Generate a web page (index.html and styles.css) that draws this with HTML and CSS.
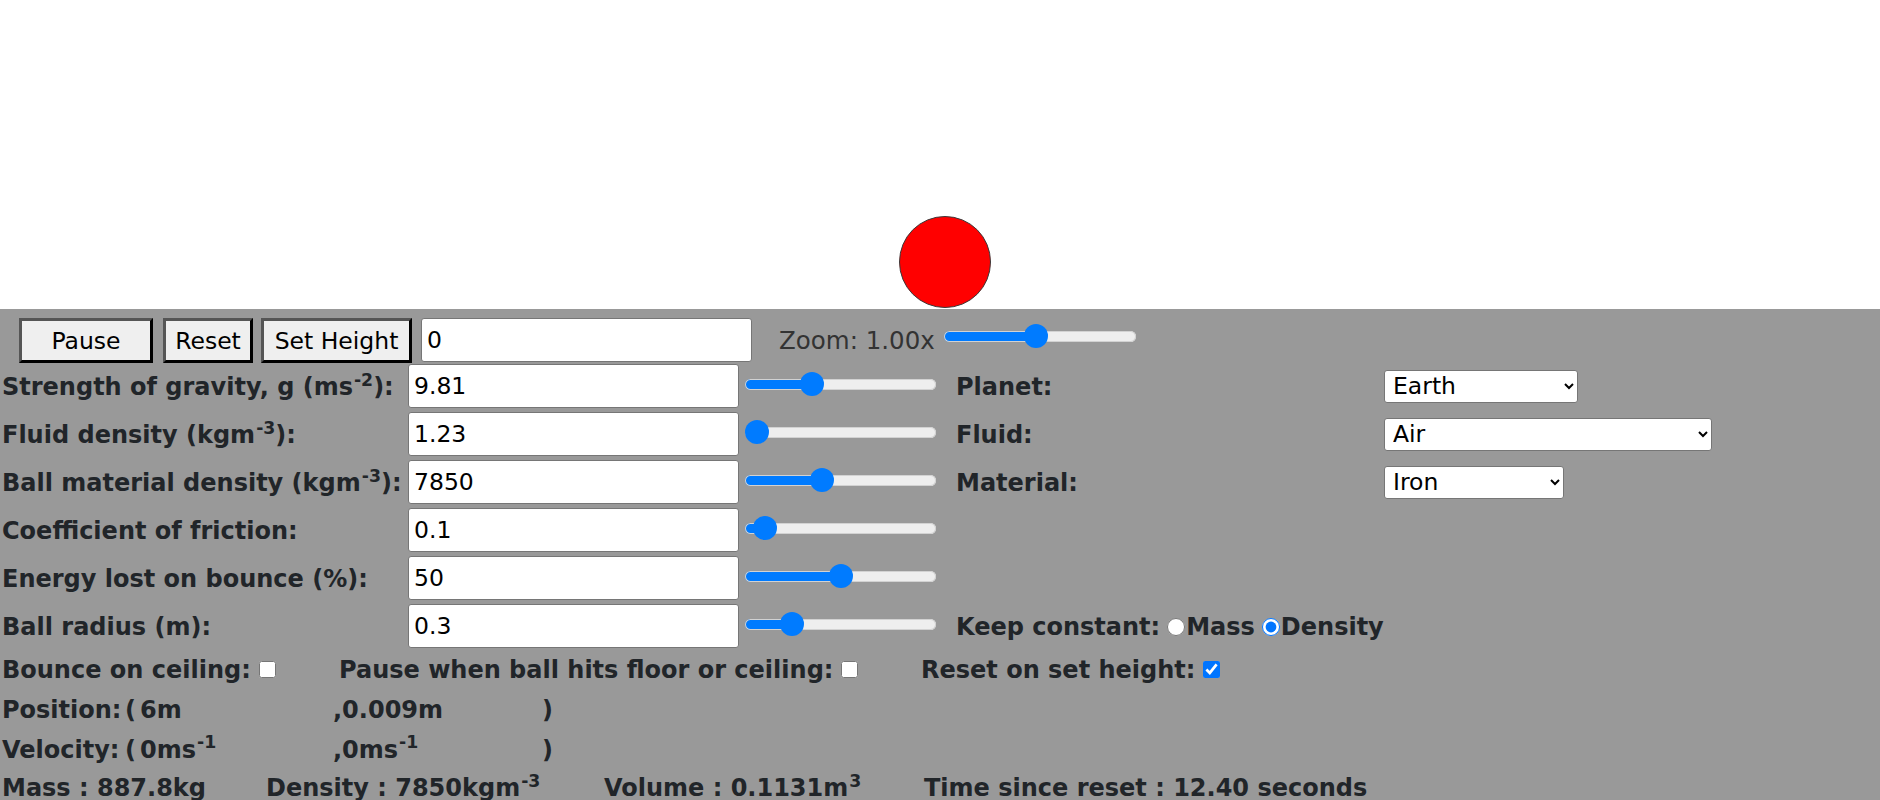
FILE: index.html
```html
<!DOCTYPE html>
<html>
<head>
<meta charset="utf-8">
<link rel="stylesheet" href="styles.css">
</head>
<body>
<div class="canvas"><div class="ball"></div></div>
<div class="panel">
  <div class="toolbar">
    <button class="btn btn-pause">Pause</button>
    <button class="btn btn-reset">Reset</button>
    <button class="btn btn-set">Set Height</button>
    <input class="txt txt-height" type="text" value="0">
    <span class="zoom-label">Zoom: 1.00x</span>
    <input class="slider slider-zoom" type="range" min="0" max="100" value="48" style="--p:48.4%">
  </div>
  <div class="params">
    <div class="lbl">Strength of gravity, g (ms<sup>-2</sup>):</div>
    <input class="txt" type="text" value="9.81">
    <input class="slider" type="range" min="0" max="100" value="33" style="--p:35.0%">
    <div class="lbl lbl2">Planet:</div>
    <div><select class="sel sel-planet"><option>Earth</option></select></div>

    <div class="lbl">Fluid density (kgm<sup>-3</sup>):</div>
    <input class="txt" type="text" value="1.23">
    <input class="slider" type="range" min="0" max="100" value="0" style="--p:6.3%">
    <div class="lbl lbl2">Fluid:</div>
    <div><select class="sel sel-fluid"><option>Air</option></select></div>

    <div class="lbl">Ball material density (kgm<sup>-3</sup>):</div>
    <input class="txt" type="text" value="7850">
    <input class="slider" type="range" min="0" max="100" value="39" style="--p:40.4%">
    <div class="lbl lbl2">Material:</div>
    <div><select class="sel sel-material"><option>Iron</option></select></div>

    <div class="lbl">Coefficient of friction:</div>
    <input class="txt" type="text" value="0.1">
    <input class="slider" type="range" min="0" max="100" value="5" style="--p:10.2%">
    <div></div>
    <div></div>

    <div class="lbl">Energy lost on bounce (%):</div>
    <input class="txt" type="text" value="50">
    <input class="slider" type="range" min="0" max="100" value="50" style="--p:50%">
    <div></div>
    <div></div>

    <div class="lbl">Ball radius (m):</div>
    <input class="txt" type="text" value="0.3">
    <input class="slider" type="range" min="0" max="100" value="21" style="--p:24.6%">
    <div class="lbl lbl2 keep">Keep constant: <input class="radio" type="radio" name="keep">Mass <input class="radio" type="radio" name="keep" checked>Density</div>
    <div></div>
  </div>
  <div class="checks">
    <div class="grp g1">Bounce on ceiling: <input class="chk" type="checkbox"></div>
    <div class="grp g2">Pause when ball hits floor or ceiling: <input class="chk" type="checkbox"></div>
    <div class="grp g3">Reset on set height: <input class="chk" type="checkbox" checked></div>
  </div>
  <div class="vec">
    <span>Position:</span><span>(</span><span>6m</span><span>,0.009m</span><span>)</span>
  </div>
  <div class="vec">
    <span>Velocity:</span><span>(</span><span>0ms<sup>-1</sup></span><span>,0ms<sup>-1</sup></span><span>)</span>
  </div>
  <div class="stats">
    <span>Mass : 887.8kg</span>
    <span>Density : 7850kgm<sup>-3</sup></span>
    <span>Volume : 0.1131m<sup>3</sup></span>
    <span>Time since reset : 12.40 seconds</span>
  </div>
</div>
</body>
</html>
```

FILE: styles.css
```css
* { box-sizing: border-box; }
html, body { margin: 0; padding: 0; }
body {
  font-family: "DejaVu Sans", Verdana, sans-serif;
  font-size: 24px;
  color: #212529;
  background: #999;
  overflow: hidden;
}
sup { font-size: 0.72em; line-height: 0; vertical-align: 0.55em; margin-left: 1px; }

.canvas { position: relative; height: 309px; background: #fff; }
.ball {
  position: absolute;
  left: 899px; top: 216px;
  width: 92px; height: 92px;
  border-radius: 50%;
  background: #ff0000;
  border: 1.5px solid #3a3a3a;
}

.panel { background: #999; height: 491px; overflow: hidden; }

.toolbar {
  display: flex;
  align-items: flex-start;
  height: 55px;
  padding: 9px 0 0 19px;
}
.btn {
  height: 45px;
  padding: 0;
  margin: 0;
  font-family: "DejaVu Sans", Verdana, sans-serif;
  font-size: 23.5px;
  color: #000;
  background: #efefef;
  border: 3px solid;
  border-color: #555 #000 #000 #555;
}
.btn-pause { width: 134px; }
.btn-reset { width: 90px; margin-left: 10px; }
.btn-set { width: 151px; margin-left: 8px; }

.txt {
  height: 44px;
  margin: 0;
  padding: 0 5px;
  font-family: "DejaVu Sans", Verdana, sans-serif;
  font-size: 23.5px;
  color: #000;
  background: #fff;
  border: 1px solid #767676;
  border-radius: 3px;
  outline: none;
}
.txt-height { width: 331px; margin-left: 9px; }

.zoom-label {
  margin-left: 27px;
  color: #333;
  font-size: 24.5px;
  line-height: 38px;
  padding-top: 4px;
  white-space: nowrap;
}

.slider {
  -webkit-appearance: none;
  appearance: none;
  width: 191px;
  height: 24px;
  margin: 0;
  padding: 0;
  background: transparent;
}
.slider::-webkit-slider-runnable-track {
  height: 11px;
  border-radius: 6px;
  background: linear-gradient(to right, #007bff var(--p), #eeeeee var(--p));
  box-shadow: inset 0 0 0 1px #d2d2d2;
}
.slider::-webkit-slider-thumb {
  -webkit-appearance: none;
  appearance: none;
  width: 24px;
  height: 24px;
  margin-top: -6.5px;
  border-radius: 50%;
  background: #007bff;
  border: none;
}
.slider-zoom { width: 192px; margin-left: 9px; margin-top: 6px; }

.params {
  display: grid;
  grid-template-columns: 408px 335px 213px 428px auto;
  grid-auto-rows: 44px;
  row-gap: 4px;
  align-items: center;
}
.params .txt { width: 331px; }
.params .slider { margin: -4px 0 0 2px; }
.lbl { font-weight: bold; padding-left: 2px; padding-top: 2px; white-space: nowrap; }
.lbl2 { padding-left: 0; }
.keep { display: flex; align-items: center; }
.radio { width: 18px; height: 18px; margin: 0 1px 0 7px; }

.sel {
  height: 33px;
  margin: 0;
  padding: 0 4px;
  font-family: "DejaVu Sans", Verdana, sans-serif;
  font-size: 23.5px;
  color: #000;
  background-color: #fff;
  border: 1px solid #767676;
  border-radius: 3px;
}
.sel-planet { width: 194px; }
.sel-fluid { width: 328px; }
.sel-material { width: 180px; }

.checks {
  display: grid;
  grid-template-columns: 337px 582px auto;
  height: 41px;
  align-items: center;
  padding-left: 2px;
  padding-top: 2px;
  font-weight: bold;
}
.grp { display: flex; align-items: center; white-space: nowrap; }
.chk { width: 17px; height: 17px; margin: 0 0 0 8px; }

.vec {
  display: grid;
  grid-template-columns: 123px 15px 193px 209px auto;
  height: 40px;
  align-items: center;
  padding-left: 2px;
  padding-top: 1px;
  font-weight: bold;
  white-space: nowrap;
}

.stats {
  display: grid;
  grid-template-columns: 264px 338px 320px auto;
  height: 36px;
  align-items: center;
  padding-left: 2px;
  padding-top: 2px;
  font-weight: bold;
  white-space: nowrap;
}
```
